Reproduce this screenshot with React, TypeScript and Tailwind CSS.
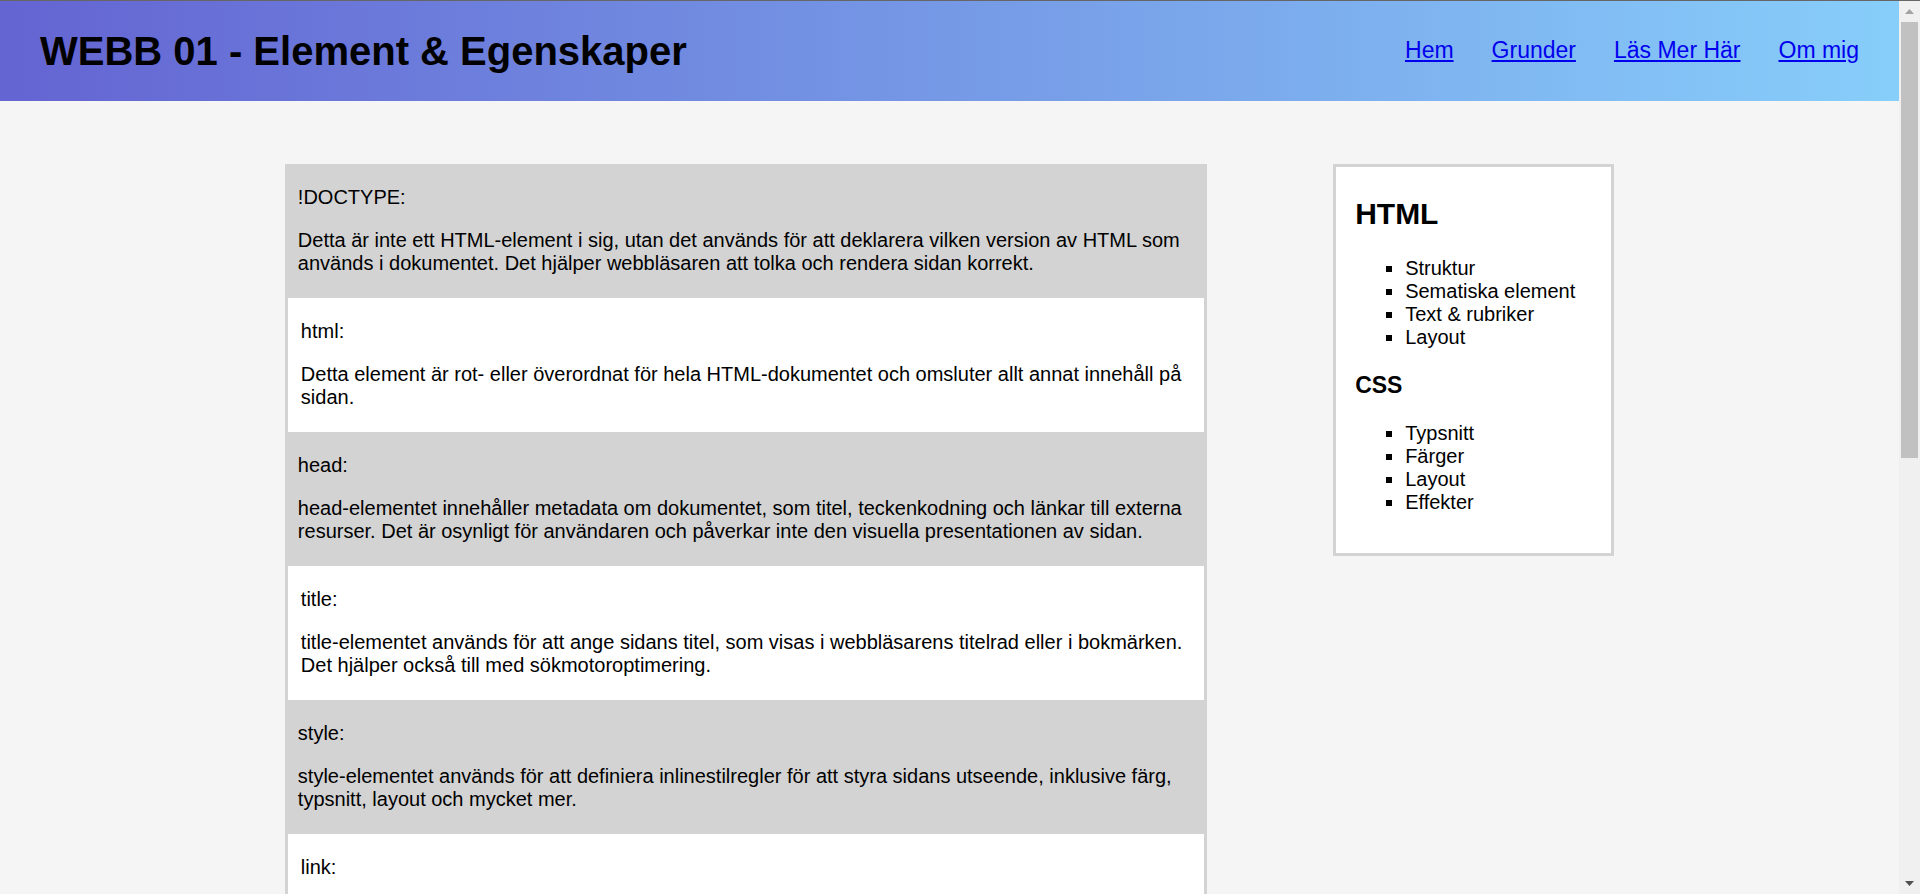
const links = ['Hem', 'Grunder', 'Läs Mer Här', 'Om mig'];

const elements = [
  {
    name: '!DOCTYPE:',
    text: 'Detta är inte ett HTML-element i sig, utan det används för att deklarera vilken version av HTML som används i dokumentet. Det hjälper webbläsaren att tolka och rendera sidan korrekt.',
  },
  {
    name: 'html:',
    text: 'Detta element är rot- eller överordnat för hela HTML-dokumentet och omsluter allt annat innehåll på sidan.',
  },
  {
    name: 'head:',
    text: 'head-elementet innehåller metadata om dokumentet, som titel, teckenkodning och länkar till externa resurser. Det är osynligt för användaren och påverkar inte den visuella presentationen av sidan.',
  },
  {
    name: 'title:',
    text: 'title-elementet används för att ange sidans titel, som visas i webbläsarens titelrad eller i bokmärken. Det hjälper också till med sökmotoroptimering.',
  },
  {
    name: 'style:',
    text: 'style-elementet används för att definiera inlinestilregler för att styra sidans utseende, inklusive färg, typsnitt, layout och mycket mer.',
  },
  { name: 'link:', text: '' },
];

const htmlTopics = ['Struktur', 'Sematiska element', 'Text & rubriker', 'Layout'];
const cssTopics = ['Typsnitt', 'Färger', 'Layout', 'Effekter'];

function Header() {
  return (
    <header className="flex h-[100px] items-center justify-between bg-[linear-gradient(90deg,#6464d2,#87cefa)] px-10">
      <h1 className="text-[40px] leading-[46px] font-bold">WEBB 01 - Element &amp; Egenskaper</h1>
      <nav>
        <ul className="flex gap-[38px] pb-[2px]">
          {links.map((label) => (
            <li key={label}>
              <a href="#" className="text-[23px] leading-[26px] text-[#0000ee] underline">
                {label}
              </a>
            </li>
          ))}
        </ul>
      </nav>
    </header>
  );
}

function ElementRow({ name, text, shaded }: { name: string; text: string; shaded: boolean }) {
  return (
    <section
      className={
        shaded
          ? 'flex min-h-[134px] flex-col gap-5 bg-[#d3d3d3] px-[13px] pt-[22px] pb-[23px]'
          : 'flex min-h-[134px] flex-col gap-5 border-x-3 border-[#d3d3d3] bg-white px-[13px] pt-[22px] pb-[23px]'
      }
    >
      <p>{name}</p>
      {text && <p>{text}</p>}
    </section>
  );
}

function TopicList({ items }: { items: string[] }) {
  return (
    <ul className="my-5 list-[square] pl-[50px]">
      {items.map((item) => (
        <li key={item}>{item}</li>
      ))}
    </ul>
  );
}

function Scrollbar() {
  return (
    <div className="flex w-[21px] shrink-0 flex-col bg-[#f0f0f0] px-[2px]" aria-hidden="true">
      <div className="flex h-[21px] items-center justify-center">
        <svg width="9" height="5" viewBox="0 0 9 5" fill="#a3a3a3">
          <path d="M0 5 4.5 0 9 5z" />
        </svg>
      </div>
      <div className="flex-1">
        <div className="h-[51.2%] bg-[#c1c1c1]" />
      </div>
      <div className="flex h-[21px] items-center justify-center">
        <svg width="9" height="5" viewBox="0 0 9 5" fill="#505050">
          <path d="M0 0 4.5 5 9 0z" />
        </svg>
      </div>
    </div>
  );
}

export default function App() {
  return (
    <div className="flex h-screen border-t border-[#666666] bg-[#f5f5f5] font-['Liberation_Sans',Arial,sans-serif] text-[20px] leading-[23px] text-black">
      <div className="min-w-0 flex-1 overflow-hidden">
        <Header />
        <main className="mx-auto mt-[63px] flex w-[70%] items-start justify-between">
          <article className="w-[69.4%]">
            {elements.map((element, index) => (
              <ElementRow key={element.name} name={element.name} text={element.text} shaded={index % 2 === 0} />
            ))}
          </article>
          <aside className="w-[281px] border-3 border-[#d3d3d3] bg-white px-[19px] pt-[30px] pb-[19px]">
            <h2 className="mb-[26px] text-[30px] leading-[34px] font-bold">HTML</h2>
            <TopicList items={htmlTopics} />
            <h3 className="my-[23px] text-[23px] leading-[27px] font-bold">CSS</h3>
            <TopicList items={cssTopics} />
          </aside>
        </main>
      </div>
      <Scrollbar />
    </div>
  );
}
